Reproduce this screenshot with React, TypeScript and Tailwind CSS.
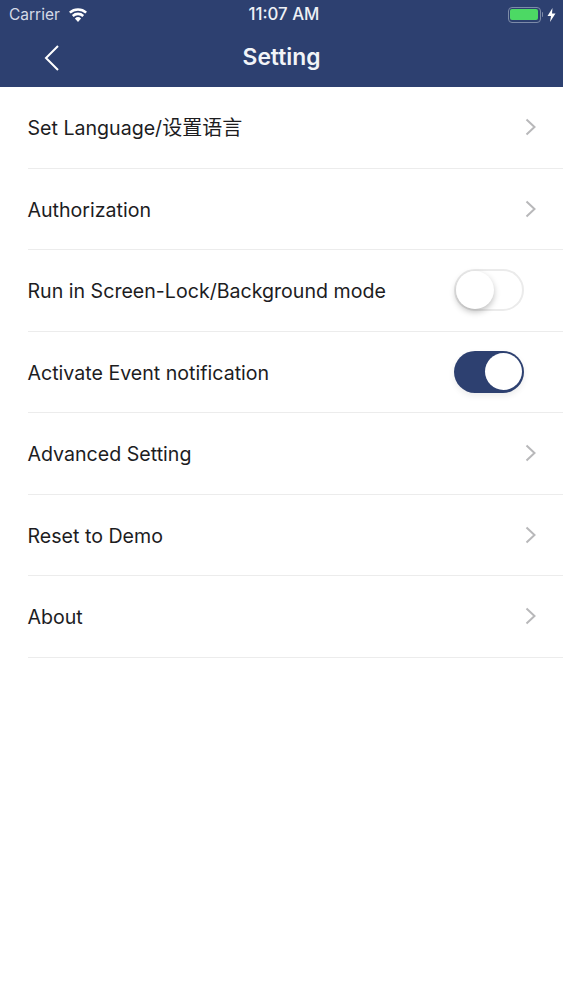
import React from "react";

const font = { fontFamily: '"Inter", "Noto Sans CJK SC", sans-serif' };

function Chevron() {
  return (
    <svg width="12" height="20" viewBox="0 0 12 20" className="mr-[26px] shrink-0" fill="none">
      <path d="M1.5 2.5 L9.5 10 L1.5 17.5" stroke="#b8b8ba" strokeWidth="2" />
    </svg>
  );
}

function Toggle({ on }: { on: boolean }) {
  if (on) {
    return (
      <div className="mr-[39px] flex h-[42px] w-[70px] shrink-0 items-center justify-end rounded-full bg-[#2d4070] pr-[2px] shadow-[0_3px_6px_rgba(0,0,0,0.08)]">
        <div className="h-[37px] w-[37px] rounded-full bg-white" />
      </div>
    );
  }
  return (
    <div className="mr-[39px] flex h-[42px] w-[70px] shrink-0 items-center rounded-full border-2 border-[#ebebeb] bg-white">
      <div className="h-[38px] w-[38px] rounded-full bg-white shadow-[0_3px_6px_rgba(0,0,0,0.25)]" />
    </div>
  );
}

function Row({ label, right, first }: { label: React.ReactNode; right: React.ReactNode; first?: boolean }) {
  return (
    <div className="ml-[28px] flex h-[81.5px] items-center justify-between border-b border-[#ececec]">
      <span className={first ? "-ml-[0.5px] pt-[2px] text-[19.6px] leading-none text-[#1d1d1f]" : "-ml-[0.5px] pt-[4px] text-[19.6px] leading-none text-[#1d1d1f]"}>{label}</span>
      {right}
    </div>
  );
}

export default function App() {
  return (
    <div className="h-[1000px] w-[563px] overflow-hidden bg-white" style={font}>
      <div className="h-[87px] bg-[#2d4070] text-white">
        <div className="relative flex h-[29px] items-center pl-[9px] pr-[7px]">
          <span className="text-[15.5px] text-[#d5dae6]">Carrier</span>
          <svg width="20" height="14" viewBox="0 0 20 14" className="ml-[8px]" fill="white">
            <path d="M10 14 L6.9 10.4 A4.6 4.6 0 0 1 13.1 10.4 Z" />
            <path d="M5.6 8.9 L3.9 7 A9 9 0 0 1 16.1 7 L14.4 8.9 A6.6 6.6 0 0 0 5.6 8.9 Z" />
            <path d="M2.7 5.6 L1 3.7 A13.4 13.4 0 0 1 19 3.7 L17.3 5.6 A10.8 10.8 0 0 0 2.7 5.6 Z" />
          </svg>
          <span className="absolute left-0 top-[5px] w-[568px] text-center text-[16.8px] font-medium leading-[19px] text-[#eef0f5]">11:07 AM</span>
          <div className="ml-auto flex items-center">
            <div className="flex h-[16px] w-[33px] items-center rounded-[4px] border border-[#7d8ba8] p-[1.5px]">
              <div className="h-full w-full rounded-[2px] bg-[#4cd964]" />
            </div>
            <div className="ml-[1px] h-[5px] w-[1.5px] rounded-r bg-[#7d8ba8]" />
            <svg width="9" height="14" viewBox="0 0 9 14" className="ml-[4px]" fill="white">
              <path d="M5.5 0 L0.5 8 H4 L3 14 L8.5 5.5 H5 Z" />
            </svg>
          </div>
        </div>
        <div className="relative flex h-[57px] items-center justify-center">
          <svg width="16" height="28" viewBox="0 0 16 28" className="absolute left-[44px] top-[15px]" fill="none">
            <path d="M14 2 L2 14 L14 26" stroke="white" strokeWidth="2" />
          </svg>
          <span className="-mt-[1px] text-[22.8px] font-semibold leading-none text-[#f2f4f8]">Setting</span>
        </div>
      </div>
      <Row first label={<>Set Language/<span className="text-[20px]">设置语言</span></>} right={<Chevron />} />
      <Row label="Authorization" right={<Chevron />} />
      <Row label="Run in Screen-Lock/Background mode" right={<Toggle on={false} />} />
      <Row label="Activate Event notification" right={<Toggle on={true} />} />
      <Row label="Advanced Setting" right={<Chevron />} />
      <Row label="Reset to Demo" right={<Chevron />} />
      <Row label="About" right={<Chevron />} />
    </div>
  );
}
